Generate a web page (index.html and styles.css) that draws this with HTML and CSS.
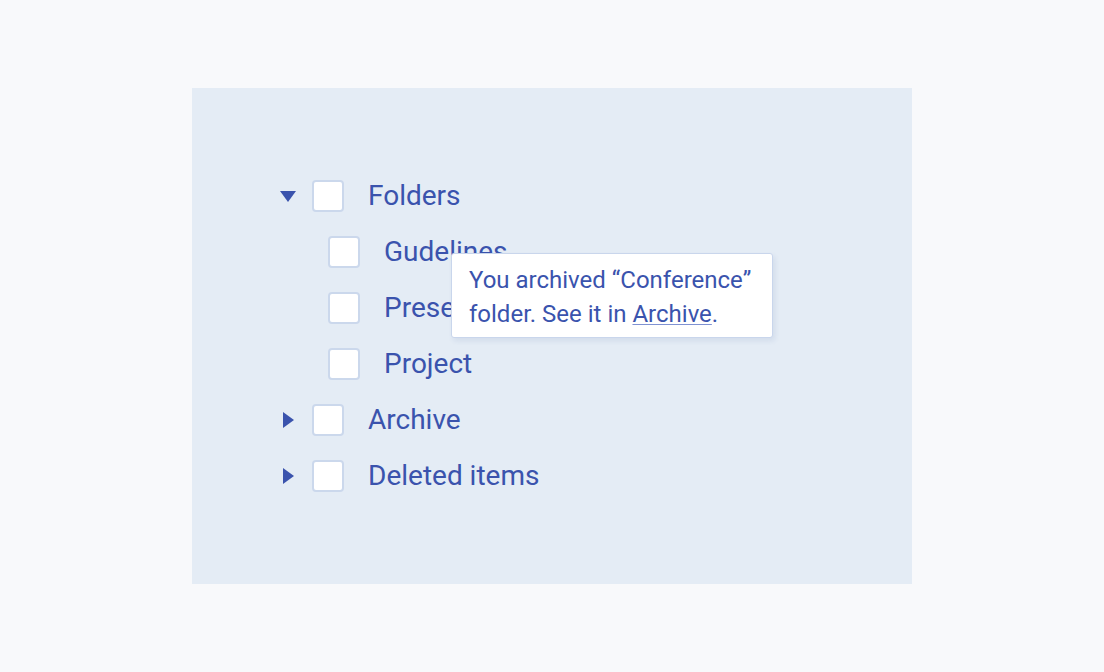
FILE: index.html
```html
<!DOCTYPE html>
<html lang="en">
<head>
<meta charset="utf-8">
<title>Tree</title>
<link rel="stylesheet" href="styles.css">
</head>
<body>
<div class="panel">
  <ul class="tree">
    <li class="row">
      <span class="toggle"><svg width="16" height="11" viewBox="0 0 16 11"><path d="M0 0H16L8 11Z" fill="#3a53ad"/></svg></span>
      <span class="box"></span>
      <span class="label">Folders</span>
    </li>
    <li class="row child">
      <span class="box"></span>
      <span class="label">Gudelines</span>
    </li>
    <li class="row child">
      <span class="box"></span>
      <span class="label">Presentations</span>
    </li>
    <li class="row child">
      <span class="box"></span>
      <span class="label">Project</span>
    </li>
    <li class="row">
      <span class="toggle"><svg width="11" height="16" viewBox="0 0 11 16"><path d="M0 0V16L11 8Z" fill="#3a53ad"/></svg></span>
      <span class="box"></span>
      <span class="label">Archive</span>
    </li>
    <li class="row">
      <span class="toggle"><svg width="11" height="16" viewBox="0 0 11 16"><path d="M0 0V16L11 8Z" fill="#3a53ad"/></svg></span>
      <span class="box"></span>
      <span class="label">Deleted items</span>
    </li>
  </ul>
  <div class="tooltip">You archived “Conference” folder. See it in <a class="link" href="#">Archive</a>.</div>
</div>
</body>
</html>
```
FILE: styles.css
```css
html, body {
  margin: 0;
  padding: 0;
  background: #f8f9fb;
}
body {
  font-family: Roboto, "Noto Sans", sans-serif;
  color: #3a53ad;
  padding: 88px 0 0 192px;
}
.panel {
  position: relative;
  width: 720px;
  height: 496px;
  background: #e4ecf5;
  box-sizing: border-box;
  padding: 80px 0 0 88px;
}
.tree {
  list-style: none;
  margin: 0;
  padding: 0;
}
.row {
  display: flex;
  align-items: center;
  height: 56px;
}
.toggle {
  width: 16px;
  height: 16px;
  margin-right: 16px;
  display: flex;
  align-items: center;
  justify-content: center;
}
.child {
  padding-left: 48px;
}
.box {
  width: 32px;
  height: 32px;
  box-sizing: border-box;
  background: #ffffff;
  border: 2px solid #cbd8ec;
  border-radius: 4px;
  margin-right: 24px;
  flex: none;
}
.label {
  font-size: 28px;
  line-height: 34px;
}
.tooltip {
  position: absolute;
  left: 259px;
  top: 165px;
  width: 322px;
  box-sizing: border-box;
  background: #ffffff;
  border: 1px solid #c9d6ec;
  border-radius: 3px;
  box-shadow: 2px 3px 5px rgba(60, 90, 160, 0.1);
  padding: 9px 10px 6px 17px;
  font-size: 24px;
  line-height: 34px;
}
.link {
  color: #3a53ad;
  text-decoration: underline;
  text-decoration-color: #7f92d2;
  text-underline-offset: 2px;
  text-decoration-thickness: 1px;
}
```
